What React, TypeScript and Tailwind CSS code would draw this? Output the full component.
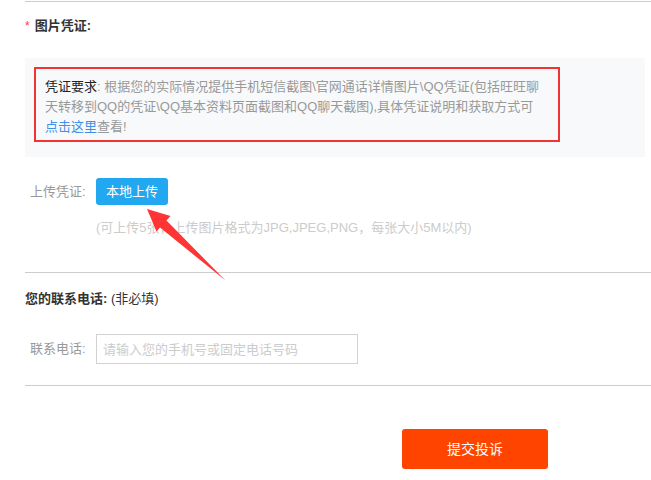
import React from 'react';

const font = { fontFamily: '"Liberation Sans", "Noto Sans CJK SC", sans-serif' };

const Arrow: React.FC = () => (
  <svg className="absolute left-0 top-0 pointer-events-none" width="651" height="480" viewBox="0 0 651 480">
    <polygon
      points="147,209 170.5,216 166.5,220.5 225.5,280.5 160,227.5 156.5,231.5"
      fill="#ff3535"
    />
  </svg>
);

const App: React.FC = () => {
  return (
    <div className="relative w-[651px] h-[480px] bg-white overflow-hidden text-[13px]" style={font}>
      <div className="pt-px">
        <div className="ml-[25px] h-px bg-[#cccccc]" />
      </div>

      <h3 className="mt-[14px] ml-[25px] h-[20px] leading-[20px] font-bold text-[#333] flex items-center">
        <span className="text-[#ff3b3b] text-[12px] font-normal mr-[5px]">*</span>
        <span>图片凭证:</span>
      </h3>

      <div className="mt-[22px] ml-[25px] w-[620px] h-[99px] bg-[#f8f9fb] pt-[9px] pl-[9px]">
        <div className="w-[526px] border-2 border-[#f23333] pl-[9px] pr-[6px] pt-[8px] pb-[3px] leading-[20px] text-[#999]">
          <span className="text-[#222]">凭证要求</span>: 根据您的实际情况提供手机短信截图\官网通话详情图片\QQ凭证(包括旺旺聊
          <br />
          天转移到QQ的凭证\QQ基本资料页面截图和QQ聊天截图),具体凭证说明和获取方式可
          <br />
          <a className="text-[#3d8fe8]">点击这里</a>查看!
        </div>
      </div>

      <div className="mt-[21px] ml-[30px] flex items-center">
        <span className="w-[66px] text-[#999] leading-[20px]">上传凭证:</span>
        <button className="w-[72px] h-[27px] rounded-[3px] bg-[#21a8f0] text-white leading-[27px] text-center">
          本地上传
        </button>
      </div>
      <p className="mt-[13px] ml-[96px] leading-[20px] text-[#cccccc]">
        (可上传5张，上传图片格式为JPG,JPEG,PNG，每张大小5M以内)
      </p>

      <div className="mt-[34px] ml-[25px] h-px bg-[#cccccc]" />

      <h3 className="mt-[16px] ml-[25px] leading-[20px] text-[#333]">
        <span className="font-bold">您的联系电话:</span> (非必填)
      </h3>

      <div className="mt-[25px] ml-[30px] flex items-center">
        <span className="w-[66px] text-[#999] leading-[20px]">联系电话:</span>
        <input
          className="w-[262px] h-[30px] border border-[#d2d2d2] px-[6px] outline-none placeholder:text-[#cccccc] text-[13px]"
          placeholder="请输入您的手机号或固定电话号码"
          style={font}
        />
      </div>

      <div className="mt-[21px] ml-[25px] h-px bg-[#cccccc]" />

      <button className="mt-[43px] ml-[402px] w-[146px] h-[40px] rounded-[3px] bg-[#ff4400] text-white text-[14px] block">
        提交投诉
      </button>

      <Arrow />
    </div>
  );
};

export default App;
